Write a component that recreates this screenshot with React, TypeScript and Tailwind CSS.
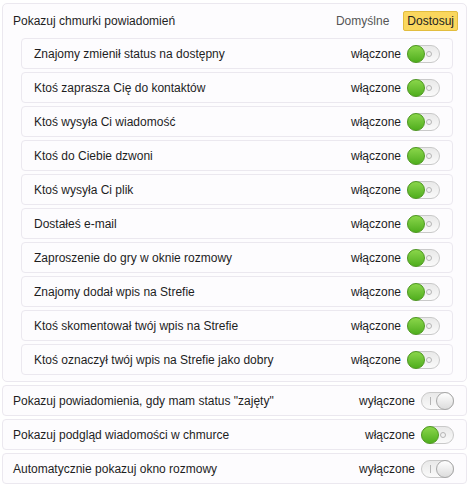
import React from "react";

const rows = [
  { label: "Znajomy zmienił status na dostępny", on: true },
  { label: "Ktoś zaprasza Cię do kontaktów", on: true },
  { label: "Ktoś wysyła Ci wiadomość", on: true },
  { label: "Ktoś do Ciebie dzwoni", on: true },
  { label: "Ktoś wysyła Ci plik", on: true },
  { label: "Dostałeś e-mail", on: true },
  { label: "Zaproszenie do gry w oknie rozmowy", on: true },
  { label: "Znajomy dodał wpis na Strefie", on: true },
  { label: "Ktoś skomentował twój wpis na Strefie", on: true },
  { label: "Ktoś oznaczył twój wpis na Strefie jako dobry", on: true },
];

const bottom = [
  { label: 'Pokazuj powiadomienia, gdy mam status "zajęty"', on: false },
  { label: "Pokazuj podgląd wiadomości w chmurce", on: true },
  { label: "Automatycznie pokazuj okno rozmowy", on: false },
];

function Toggle({ on }: { on: boolean }) {
  return (
    <div className="relative w-[33px] h-[18px]">
      <div className="absolute inset-0 rounded-full border border-[#c9c9c9] bg-gradient-to-b from-[#e9e9e9] to-[#fafafa]" />
      {on ? (
        <>
          <div className="absolute right-[8px] top-[6px] w-[6px] h-[6px] rounded-full border border-[#b5b5b5]" />
          <div className="absolute left-0 top-0 w-[18px] h-[18px] rounded-full border border-[#4d9a1e] bg-gradient-to-b from-[#8ad64a] to-[#4fae1c]" />
        </>
      ) : (
        <>
          <div className="absolute left-[9px] top-[5px] w-[1px] h-[8px] bg-[#b5b5b5]" />
          <div className="absolute right-0 top-0 w-[18px] h-[18px] rounded-full border border-[#a8a8a8] bg-gradient-to-b from-[#ffffff] to-[#dcdcdc]" />
        </>
      )}
    </div>
  );
}

function Row({ label, on, outer }: { label: string; on: boolean; outer?: boolean }) {
  return (
    <div
      className={
        outer
          ? "h-[31px] flex items-center justify-between pl-[10px] pr-[12px] rounded-[4px] border border-[#ebe8ef] bg-[#fdfcfe]"
          : "h-[31px] flex items-center justify-between pl-[12px] pr-[12px] rounded-[4px] border border-[#ebe8ef] bg-[#fdfcfe]"
      }
    >
      <span>{label}</span>
      <div className="flex items-center gap-[6px]">
        <span>{on ? "włączone" : "wyłączone"}</span>
        <Toggle on={on} />
      </div>
    </div>
  );
}

export default function App() {
  return (
    <div
      className="w-[472px] h-[489px] bg-white text-[12px] text-[#1e1e1e] pl-[2px] pr-[5px] pt-[3px]"
      style={{ fontFamily: '"Liberation Sans", Arial, sans-serif' }}
    >
      <div className="rounded-[5px] border border-[#ebe8ef] bg-[#fdfcfe] pb-[6px]">
        <div className="h-[34px] flex items-center justify-between pl-[10px] pr-[8px]">
          <span>Pokazuj chmurki powiadomień</span>
          <div className="flex items-center gap-[14px]">
            <span className="text-[#555]">Domyślne</span>
            <div className="h-[20px] px-[3px] flex items-center border border-[#e2bd3e] bg-[#fad75e] rounded-[2px] text-[#222]">
              Dostosuj
            </div>
          </div>
        </div>
        <div className="flex flex-col gap-[3px] ml-[18px] mr-[13px]">
          {rows.map((r) => (
            <Row key={r.label} label={r.label} on={r.on} />
          ))}
        </div>
      </div>
      <div className="flex flex-col gap-[3px] mt-[3px]">
        {bottom.map((r) => (
          <Row key={r.label} label={r.label} on={r.on} outer />
        ))}
      </div>
    </div>
  );
}
